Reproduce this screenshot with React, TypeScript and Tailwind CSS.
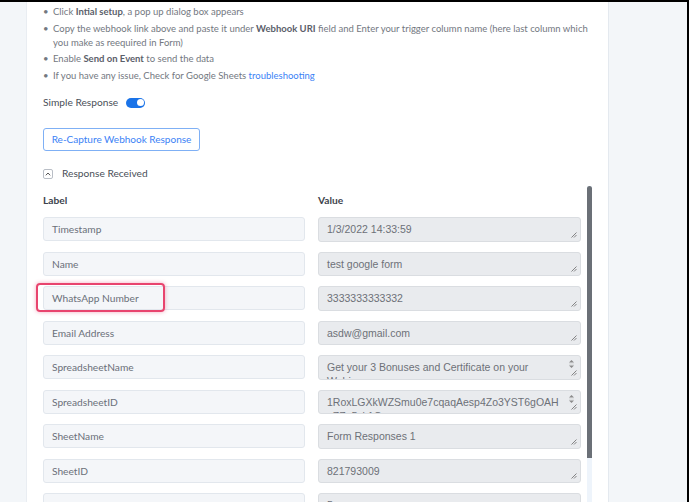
import React from 'react';

const uiFont = { fontFamily: 'Lato, "Open Sans", sans-serif' };
const fieldFont = { fontFamily: '"Liberation Sans", Arial, sans-serif' };

type Row = { label: string; value: string; multi?: boolean; token?: boolean; highlight?: boolean };

const rows: Row[] = [
  { label: 'Timestamp', value: '1/3/2022 14:33:59' },
  { label: 'Name', value: 'test google form' },
  { label: 'WhatsApp Number', value: '3333333333332', highlight: true },
  { label: 'Email Address', value: 'asdw@gmail.com' },
  { label: 'SpreadsheetName', value: 'Get your 3 Bonuses and Certificate on your Webinar', multi: true },
  { label: 'SpreadsheetID', value: '1RoxLGXkWZSmu0e7cqaqAesp4Zo3YST6gOAH_ZZg5xk1Q', multi: true, token: true },
  { label: 'SheetName', value: 'Form Responses 1' },
  { label: 'SheetID', value: '821793009' },
  { label: 'RowNumber', value: '5' },
];

function ResizeGrip() {
  return (
    <svg className="absolute bottom-[3px] right-[3px]" width="7" height="7" viewBox="0 0 7 7">
      <path d="M6.5 1.5 L1.5 6.5 M6.5 4 L4 6.5" stroke="#777" strokeWidth="0.9" fill="none" />
    </svg>
  );
}

function Spinner() {
  return (
    <svg className="absolute top-[3px] right-[5px]" width="7" height="10" viewBox="0 0 7 10">
      <path d="M3.5 1 L6 3.5 L1 3.5 Z" fill="#8a8a8a" />
      <path d="M1 6.5 L6 6.5 L3.5 9 Z" fill="#8a8a8a" />
      <path d="M1 5 L6 5" stroke="#c9c9c9" strokeWidth="0.6" />
    </svg>
  );
}

function FieldRow({ row }: { row: Row }) {
  return (
    <div className="grid grid-cols-[262px_263px] gap-x-[13px]">
      <div className="relative">
        <div
          className="h-[24px] rounded-[3px] border border-[#e2e7ed] bg-[#f4f6f9] pl-[8px] text-[10.2px] leading-[22px] text-[#6b7079]"
          style={uiFont}
        >
          {row.label}
        </div>
        {row.highlight && (
          <div className="absolute left-[-7px] top-[-3px] h-[29px] w-[129px] rounded-[4px] border-2 border-[#e8446e] shadow-[0_0_4px_rgba(232,68,110,0.45)]" />
        )}
      </div>
      <div className="relative h-[24.5px] overflow-hidden rounded-[3px] border border-[#dadde1] bg-[#e9ebee]">
        <div
          className={`pl-[8px] pt-[4px] text-[10.5px] leading-[14px] text-[#6d7178] ${row.multi ? 'w-[240px]' : ''} ${row.token ? 'break-all' : ''}`}
          style={fieldFont}
        >
          {row.value}
        </div>
        {row.multi && <Spinner />}
        <ResizeGrip />
      </div>
    </div>
  );
}

export default function App() {
  return (
    <div className="flex h-[502px] w-[689px] overflow-hidden border-t-2 border-r-2 border-black bg-[#f3f6f9]">
      <div className="w-[27px] shrink-0 border-r border-[#e9edf2] bg-[#f3f6f9]" />

      <div className="w-[581px] shrink-0 bg-white pl-4 pt-[3px]" style={uiFont}>
        {/* setup steps */}
        <ul className="flex flex-col gap-[2.5px] text-[9.5px] leading-[14px] text-[#737881]">
          <li className="flex">
            <span className="w-[10px] shrink-0">•</span>
            <span>
              Click <b className="font-bold text-[#5b606a]">Intial setup</b>, a pop up dialog box appears
            </span>
          </li>
          <li className="flex">
            <span className="w-[10px] shrink-0">•</span>
            <span className="w-[542px]">
              Copy the webhook link above and paste it under <b className="font-bold text-[#5b606a]">Webhook URI</b> field and Enter your
              trigger column name (here last column which you make as reequired in Form)
            </span>
          </li>
          <li className="flex">
            <span className="w-[10px] shrink-0">•</span>
            <span>
              Enable <b className="font-bold text-[#5b606a]">Send on Event</b> to send the data
            </span>
          </li>
          <li className="flex">
            <span className="w-[10px] shrink-0">•</span>
            <span>
              If you have any issue, Check for Google Sheets <span className="text-[#3b82f6]">troubleshooting</span>
            </span>
          </li>
        </ul>

        <div className="mt-[13px] flex h-[14px] items-center gap-[8px] text-[10.2px] text-[#4a4f58]">
          <span>Simple Response</span>
          <span className="flex h-[10px] w-[19px] items-center justify-end rounded-full bg-[#1a73e8] pr-[1.5px]">
            <span className="h-[7px] w-[7px] rounded-full bg-white" />
          </span>
        </div>

        <button className="mt-[18px] h-[23px] w-[157px] rounded-[3px] border border-[#7fb0f5] text-[10px] text-[#3b82f6]">
          Re-Capture Webhook Response
        </button>

        <div className="mt-[16px] flex h-[14px] items-center gap-[9px] text-[10.2px] text-[#4a4f58]">
          <span className="flex h-[10px] w-[10px] items-center justify-center rounded-[2px] border border-[#b9bec6]">
            <svg width="6" height="4" viewBox="0 0 6 4">
              <path d="M0.8 3.3 L3 1 L5.2 3.3" stroke="#555" strokeWidth="1" fill="none" />
            </svg>
          </span>
          <span>Response Received</span>
        </div>

        {/* response fields */}
        <div className="mt-[5px] flex gap-[6px]">
          <div className="w-[538px] shrink-0">
            <div className="mt-[7px] grid grid-cols-[262px_263px] gap-x-[13px] text-[10.2px] font-bold leading-[14px] text-[#3d434d]">
              <span>Label</span>
              <span>Value</span>
            </div>
            <div className="mt-[10.5px] flex flex-col gap-[10px]">
              {rows.map((r) => (
                <FieldRow key={r.label} row={r} />
              ))}
            </div>
          </div>
          <div className="h-[320px] w-[5px] shrink-0 bg-[#eef4fb]">
            <div className="h-[272px] w-[5px] rounded-t-full bg-[#6b7077]" />
          </div>
        </div>
      </div>

      <div className="flex-1 border-l border-[#e4e9ef] bg-[#f3f6f9]" />
    </div>
  );
}
